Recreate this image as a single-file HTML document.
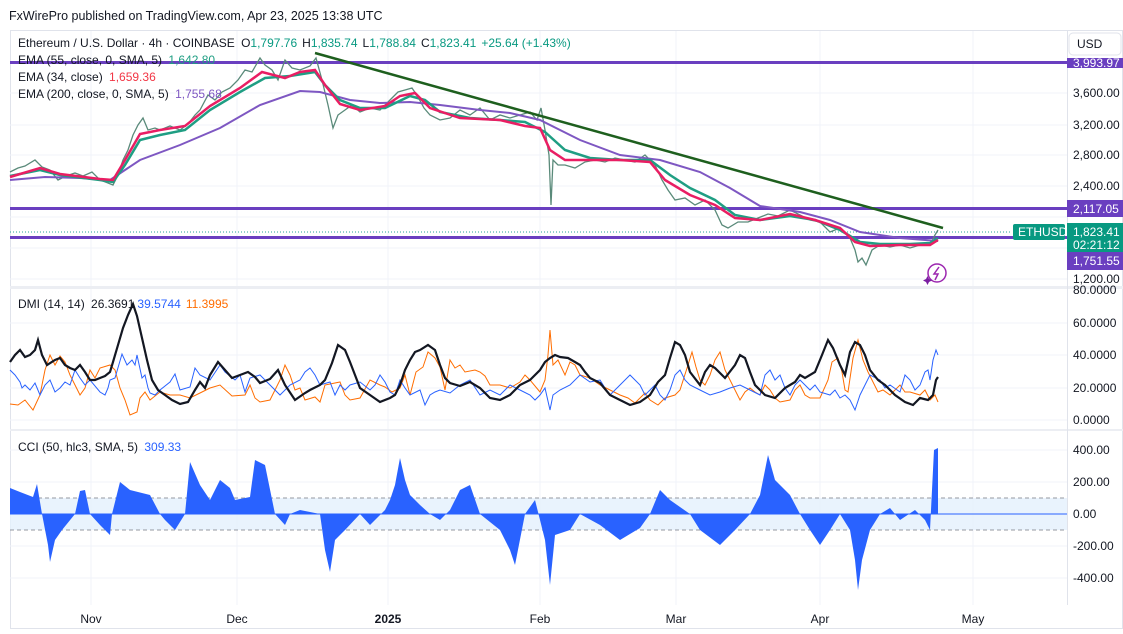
<!DOCTYPE html>
<html><head><meta charset="utf-8"><style>
html,body{margin:0;padding:0;background:#fff;}
body{width:1123px;height:629px;overflow:hidden;font-family:"Liberation Sans",sans-serif;}
svg text{font-family:"Liberation Sans",sans-serif;}
</style></head><body>
<svg width="1123" height="629" viewBox="0 0 1123 629" xmlns="http://www.w3.org/2000/svg">
<rect width="1123" height="629" fill="#fff"/>
<text x="9" y="20" font-size="12.5" fill="#131722">FxWirePro published on TradingView.com, Apr 23, 2025 13:38 UTC</text>
<!-- frame -->
<rect x="10.5" y="30.5" width="1112" height="598" fill="none" stroke="#e0e3eb"/>
<!-- grid -->
<g stroke="#f0f3fa" stroke-width="1">
<line x1="91" y1="31" x2="91" y2="605"/><line x1="237" y1="31" x2="237" y2="605"/><line x1="388" y1="31" x2="388" y2="605"/><line x1="540" y1="31" x2="540" y2="605"/><line x1="676" y1="31" x2="676" y2="605"/><line x1="820" y1="31" x2="820" y2="605"/><line x1="973" y1="31" x2="973" y2="605"/>
<line x1="10" y1="93" x2="1067" y2="93"/><line x1="10" y1="125" x2="1067" y2="125"/><line x1="10" y1="155" x2="1067" y2="155"/><line x1="10" y1="186" x2="1067" y2="186"/><line x1="10" y1="217" x2="1067" y2="217"/><line x1="10" y1="248" x2="1067" y2="248"/><line x1="10" y1="279" x2="1067" y2="279"/>
<line x1="10" y1="323" x2="1067" y2="323"/><line x1="10" y1="355" x2="1067" y2="355"/><line x1="10" y1="388" x2="1067" y2="388"/><line x1="10" y1="420" x2="1067" y2="420"/>
<line x1="10" y1="450" x2="1067" y2="450"/><line x1="10" y1="482" x2="1067" y2="482"/><line x1="10" y1="546" x2="1067" y2="546"/><line x1="10" y1="578" x2="1067" y2="578"/>
</g>
<!-- pane separators -->
<rect x="10" y="286" width="1113" height="3" fill="#eceef3"/>
<rect x="10" y="429" width="1113" height="2" fill="#eceef3"/>
<line x1="1067.5" y1="31" x2="1067.5" y2="605" stroke="#e0e3eb"/>

<!-- horizontal purple lines -->
<rect x="10" y="61" width="1057" height="3" fill="#6a3fc0"/>
<rect x="10" y="207" width="1057" height="3" fill="#6a3fc0"/>
<rect x="10" y="236" width="1057" height="3" fill="#6a3fc0"/>
<line x1="10" y1="232" x2="1010" y2="232" stroke="#26a69a" stroke-dasharray="1 2"/>

<!-- price candles approx -->
<polyline fill="none" stroke="#5a8a7a" stroke-width="1.3" points="10,172 18,168 25,166 35,160 42,167 50,170 58,180 66,176 75,173 83,176 92,172 100,180 108,183 113,185 118,175 123,160 128,150 133,135 138,125 143,118 148,130 155,128 160,130 170,126 180,130 188,124 195,115 200,110 208,95 215,100 222,92 230,88 238,80 245,70 252,72 260,58 265,65 272,70 278,80 285,60 292,68 300,70 310,66 316,58 322,80 328,105 333,128 338,115 345,110 352,105 360,112 370,108 380,110 390,100 398,92 405,90 412,88 418,97 424,108 430,115 440,120 450,118 460,110 470,115 480,108 490,120 500,115 510,118 520,115 530,112 537,120 541,108 545,130 549,155 551,205 553,160 558,165 565,165 575,168 585,162 595,160 605,162 615,158 625,160 635,162 645,155 655,165 662,180 668,190 675,200 685,198 695,205 705,200 715,210 722,225 728,228 738,222 748,222 758,218 768,214 778,216 790,210 800,215 810,220 820,222 830,232 840,228 850,238 855,250 858,262 862,258 866,265 872,250 880,245 890,247 900,245 910,248 920,245 930,245 935,235 938,230"/>
<!-- EMA 200 purple -->
<polyline fill="none" stroke="#7e57c2" stroke-width="2" points="10,180 45,177 80,178 110,180 140,160 180,145 220,128 260,105 300,91 320,92 350,100 380,103 410,102 440,105 480,110 510,113 540,120 580,140 620,155 660,160 700,172 730,188 760,206 800,212 830,220 860,232 900,238 938,241"/>
<!-- EMA 55 green -->
<polyline fill="none" stroke="#1f9e83" stroke-width="2.5" points="10,176 40,170 60,175 100,180 113,182 125,165 140,140 160,135 185,130 210,110 240,92 265,78 290,76 315,72 325,85 340,100 360,108 385,108 410,96 425,100 440,112 470,118 500,120 525,122 545,132 565,150 590,158 620,160 650,160 670,175 690,188 715,200 735,215 760,220 790,216 815,220 840,230 860,242 880,244 910,244 930,243 938,238"/>
<!-- EMA 34 red -->
<polyline fill="none" stroke="#e91e63" stroke-width="2.5" points="10,177 40,168 60,174 100,179 113,180 125,160 140,134 160,130 185,126 210,106 240,88 262,72 285,78 300,72 315,70 325,85 340,104 360,110 385,106 400,96 415,93 430,108 460,118 500,120 525,126 540,128 550,150 565,160 590,160 620,160 650,162 665,180 690,195 715,205 735,218 760,220 790,214 815,220 840,228 855,242 870,246 900,245 930,245 938,240"/>
<!-- trendline -->
<line x1="315" y1="53" x2="943" y2="228" stroke="#1e5f1e" stroke-width="2.5"/>
<!-- icon -->
<circle cx="937" cy="273" r="9" fill="none" stroke="#9c27b0" stroke-width="1.5"/>
<path d="M939 267 L934 274 L938 274 L935 280" fill="none" stroke="#9c27b0" stroke-width="1.5"/>
<path d="M926 279 l1.5 -3 l1.5 3 l3 1.5 l-3 1.5 l-1.5 3 l-1.5 -3 l-3 -1.5z" fill="#7b1fa2"/>

<!-- legend -->
<g font-size="12" fill="#131722">
<text x="18" y="47">Ethereum / U.S. Dollar · 4h · COINBASE <tspan dx="3">O</tspan><tspan fill="#089981">1,797.76</tspan><tspan dx="5">H</tspan><tspan fill="#089981">1,835.74</tspan><tspan dx="5">L</tspan><tspan fill="#089981">1,788.84</tspan><tspan dx="5">C</tspan><tspan fill="#089981">1,823.41</tspan><tspan dx="5" fill="#089981">+25.64 (+1.43%)</tspan></text>
<text x="18" y="64">EMA (55, close, 0, SMA, 5) <tspan dx="3" fill="#1f9e83">1,642.80</tspan></text>
<text x="18" y="81">EMA (34, close) <tspan dx="3" fill="#f23645">1,659.36</tspan></text>
<text x="18" y="98">EMA (200, close, 0, SMA, 5) <tspan dx="3" fill="#7e57c2">1,755.68</tspan></text>
</g>

<!-- right axis -->
<rect x="1069" y="33" width="52" height="22" rx="4" fill="#fff" stroke="#e0e3eb"/>
<text x="1077" y="48" font-size="12" fill="#131722">USD</text>
<g font-size="12" fill="#131722">
<text x="1073" y="97">3,600.00</text><text x="1073" y="129">3,200.00</text><text x="1073" y="159">2,800.00</text><text x="1073" y="190">2,400.00</text><text x="1073" y="283">1,200.00</text>
</g>
<rect x="1067" y="58" width="56" height="10" fill="#6a3fc0"/>
<text x="1073" y="67" font-size="12" fill="#fff">3,993.97</text>
<rect x="1067" y="200" width="56" height="17" fill="#6a3fc0"/>
<text x="1073" y="213" font-size="12" fill="#fff">2,117.05</text>
<rect x="1067" y="223" width="56" height="29" fill="#089981"/>
<text x="1073" y="236" font-size="12" fill="#fff">1,823.41</text>
<text x="1073" y="249" font-size="12" fill="#fff">02:21:12</text>
<rect x="1067" y="252" width="56" height="18" fill="#6a3fc0"/>
<text x="1073" y="265" font-size="12" fill="#fff">1,751.55</text>
<rect x="1013" y="224" width="52" height="16" rx="2" fill="#089981"/>
<text x="1018" y="236" font-size="12" fill="#fff">ETHUSD</text>

<!-- DMI -->
<text x="18" y="308" font-size="12" fill="#131722">DMI (14, 14) <tspan dx="3">26.3691</tspan><tspan dx="3" fill="#2962ff">39.5744</tspan><tspan dx="5" fill="#ff6d00">11.3995</tspan></text>
<polyline fill="none" stroke="#ff6d00" stroke-width="1" points="10,404 18,405 25,400 33,410 40,395 45,370 50,355 55,365 60,356 65,362 70,375 75,385 80,395 85,388 90,370 95,378 100,368 110,365 115,370 120,388 125,400 130,415 137,412 140,398 145,392 150,400 160,392 170,395 180,395 190,398 200,393 210,388 220,385 232,396 245,395 250,385 255,398 260,402 270,400 280,380 285,365 290,375 295,390 300,388 305,400 315,397 320,402 325,385 330,384 340,382 345,395 350,400 360,398 370,380 380,385 385,387 392,392 400,388 405,375 410,395 416,372 423,367 428,352 435,358 440,367 445,390 450,360 455,368 460,365 465,372 475,370 480,372 485,376 490,385 500,385 510,388 520,382 525,375 530,380 540,392 545,380 548,355 550,330 553,365 558,360 565,375 570,362 575,365 580,375 590,378 600,385 610,390 620,395 628,398 635,403 640,398 645,393 650,400 658,405 665,398 675,395 680,390 688,365 692,352 696,367 700,380 705,385 710,375 715,360 720,352 725,370 730,380 740,400 745,392 750,388 755,392 760,395 765,385 770,390 775,398 780,402 790,400 795,390 800,385 805,395 810,398 820,398 828,380 832,362 838,358 842,372 845,390 848,392 853,358 858,340 863,360 868,372 872,380 878,392 883,390 890,395 900,385 905,392 910,392 920,395 925,390 930,400 935,395 938,402"/>
<polyline fill="none" stroke="#2962ff" stroke-width="1" points="10,370 15,375 20,382 22,388 25,385 30,390 35,383 40,395 45,385 50,380 55,392 60,388 65,382 70,385 75,370 80,378 85,385 90,380 100,392 105,395 108,388 110,380 115,378 122,354 127,365 132,360 135,365 137,355 142,378 145,375 148,388 150,393 155,395 160,390 170,382 175,374 180,390 190,387 195,368 200,375 210,380 220,365 225,372 235,380 240,375 245,392 250,378 260,375 270,385 280,395 290,385 300,380 305,372 310,368 315,375 320,385 330,382 335,395 340,385 345,390 350,385 360,382 370,390 375,385 380,375 385,382 390,392 395,395 400,380 405,388 410,395 420,390 425,405 430,395 435,392 440,390 450,393 460,385 470,380 480,395 490,390 500,395 510,385 520,390 530,395 535,400 540,395 545,388 550,410 553,395 560,390 570,385 580,375 590,382 600,380 605,388 610,395 620,385 630,375 635,380 640,385 645,395 650,390 655,385 660,395 665,400 670,390 675,375 680,370 685,380 690,385 700,390 710,395 720,392 730,388 740,385 750,390 760,395 765,375 770,370 775,380 780,375 785,388 790,395 795,385 800,380 810,390 815,385 820,392 830,395 835,390 840,398 845,395 850,400 855,410 860,395 865,385 870,375 880,380 885,388 890,385 900,392 905,375 910,380 915,390 920,385 925,372 928,370 930,380 933,360 936,350 938,355"/>
<polyline fill="none" stroke="#131722" stroke-width="2.2" points="10,362 15,355 20,350 25,357 30,355 35,350 38,340 42,355 47,365 55,360 60,358 65,365 70,368 75,370 80,365 85,372 90,380 95,380 100,378 105,376 110,372 113,362 118,345 123,328 128,315 133,304 137,316 142,338 147,360 152,380 158,390 165,395 172,400 180,404 188,402 195,390 200,382 205,388 210,375 218,362 225,370 232,378 240,375 248,372 255,377 260,383 270,379 278,370 285,385 295,400 305,393 310,390 320,385 325,380 332,363 338,345 345,350 350,362 355,375 360,388 370,395 380,402 390,398 395,395 400,385 405,370 410,360 415,352 420,350 428,345 435,350 440,365 445,378 450,383 460,386 470,382 480,388 490,398 500,400 510,395 520,385 530,380 540,370 545,362 550,358 555,355 560,357 568,358 575,362 580,365 585,372 590,378 600,383 610,395 620,400 630,405 640,402 650,395 658,382 665,375 670,358 675,342 680,345 685,355 690,372 700,385 705,372 710,365 715,368 725,378 735,365 740,355 745,358 750,372 755,385 765,395 775,398 785,388 795,382 800,375 805,378 815,372 822,355 828,340 833,348 840,365 845,375 850,352 855,342 860,345 865,355 870,370 878,380 885,385 895,395 905,402 913,405 920,398 928,400 933,395 936,380 938,377"/>

<!-- DMI axis -->
<g font-size="12" fill="#131722">
<text x="1073" y="294">80.0000</text><text x="1073" y="327">60.0000</text><text x="1073" y="359">40.0000</text><text x="1073" y="392">20.0000</text><text x="1073" y="424">0.0000</text>
</g>

<!-- CCI -->
<rect x="10" y="498" width="1057" height="32" fill="#e3f0fc" opacity="0.8"/>
<line x1="10" y1="498" x2="1067" y2="498" stroke="#9598a1" stroke-dasharray="4 3"/>
<line x1="10" y1="530" x2="1067" y2="530" stroke="#9598a1" stroke-dasharray="4 3"/>
<polygon fill="#2962ff" points="10,514 10,488 20,492 33,497 37,484 42,514 48,545 50,562 55,540 62,530 75,514 80,491 85,490 90,514 100,525 110,535 112,514 120,482 130,490 150,495 160,514 165,520 175,530 185,514 190,462 200,485 210,500 220,480 230,488 235,500 250,497 255,460 265,465 275,514 285,525 290,514 300,510 320,514 325,550 330,572 335,540 345,530 360,514 370,525 385,510 390,500 395,485 400,458 405,480 410,495 420,505 430,514 440,520 450,510 460,490 470,485 480,514 500,530 510,550 515,565 525,514 535,500 545,540 550,585 555,535 570,530 580,514 600,525 620,540 640,528 650,514 660,490 670,500 690,514 700,530 720,545 735,530 750,514 760,495 768,455 775,480 790,495 800,514 810,530 820,545 830,530 840,514 850,530 855,560 858,590 862,560 870,530 880,514 890,508 900,520 915,510 925,520 930,530 934,450 938,448 938,514"/>
<line x1="10" y1="514" x2="1067" y2="514" stroke="#2962ff" stroke-width="1"/>
<text x="18" y="451" font-size="12" fill="#131722">CCI (50, hlc3, SMA, 5) <tspan dx="3" fill="#2962ff">309.33</tspan></text>
<g font-size="12" fill="#131722">
<text x="1073" y="454">400.00</text><text x="1073" y="486">200.00</text><text x="1073" y="518">0.00</text><text x="1073" y="550">-200.00</text><text x="1073" y="582">-400.00</text>
</g>

<!-- time axis -->
<g font-size="12" fill="#131722" text-anchor="middle">
<text x="91" y="623">Nov</text><text x="237" y="623">Dec</text><text x="388" y="623" font-weight="bold">2025</text><text x="540" y="623">Feb</text><text x="676" y="623">Mar</text><text x="820" y="623">Apr</text><text x="973" y="623">May</text>
</g>
</svg>
</body></html>
